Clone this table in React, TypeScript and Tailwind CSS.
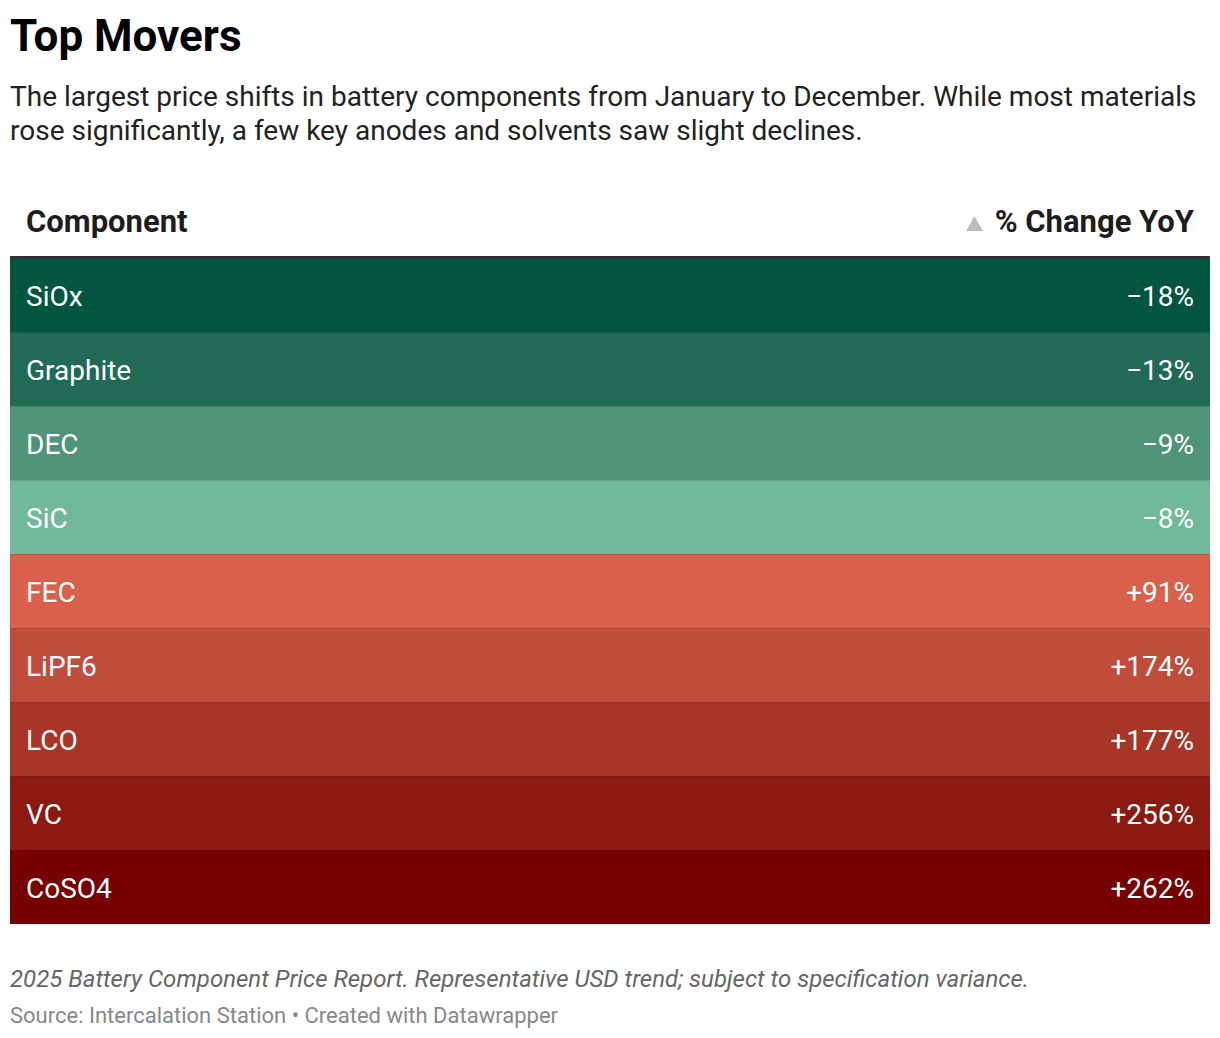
import React from "react";

const rows = [
  { name: "SiOx", value: "\u221218%", bg: "bg-[#02553f]" },
  { name: "Graphite", value: "\u221213%", bg: "bg-[#216a55]" },
  { name: "DEC", value: "\u22129%", bg: "bg-[#4f9378]" },
  { name: "SiC", value: "\u22128%", bg: "bg-[#72b89b]" },
  { name: "FEC", value: "+91%", bg: "bg-[#d9614c]" },
  { name: "LiPF6", value: "+174%", bg: "bg-[#c04d3b]" },
  { name: "LCO", value: "+177%", bg: "bg-[#a73628]" },
  { name: "VC", value: "+256%", bg: "bg-[#8b1a12]" },
  { name: "CoSO4", value: "+262%", bg: "bg-[#770000]" },
];

export default function App() {
  return (
    <div className="w-[1220px] min-h-[1038px] bg-white px-[10px] pt-[10px] font-['Roboto',sans-serif]">
      <h1 className="text-[44px] leading-[52px] font-bold text-[#000]">Top Movers</h1>
      <p className="mt-[18px] text-[28px] leading-[34px] text-[#222]">
        The largest price shifts in battery components from January to December. While most materials rose significantly, a few key anodes and solvents saw slight declines.
      </p>
      <div className="mt-[45px]">
        <div className="flex h-[66px] items-center justify-between border-b-[3px] border-[#333] px-[16px] pb-[4px]">
          <span className="text-[31px] font-bold text-[#1d1d1d]">Component</span>
          <span className="flex items-center gap-[12px] text-[31px] font-bold text-[#1d1d1d]">
            <svg width="17" height="15" viewBox="0 0 17 15" className="mt-[2px]"><polygon points="8.5,0 17,15 0,15" fill="#bdbdbd" /></svg>
            % Change YoY
          </span>
        </div>
        {rows.map((r, i) => (
          <div
            key={r.name}
            className={`flex items-center justify-between px-[16px] pt-[2px] text-[28px] text-white ${r.bg} ${i === 0 ? "h-[73px]" : "h-[74px] border-t border-black/10"}`}
          >
            <span>{r.name}</span>
            <span>{r.value}</span>
          </div>
        ))}
      </div>
      <p className="mt-[40px] text-[24px] italic leading-[30px] text-[#666]">
        2025 Battery Component Price Report. Representative USD trend; subject to specification variance.
      </p>
      <p className="mt-[8px] text-[22px] leading-[28px] text-[#888]">Source: Intercalation Station • Created with Datawrapper</p>
    </div>
  );
}
